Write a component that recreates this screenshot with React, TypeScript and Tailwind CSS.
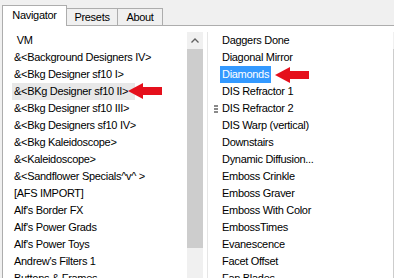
import React from 'react'

const leftItems = [
  ' VM',
  '&<Background Designers IV>',
  '&<Bkg Designer sf10 I>',
  '&<BKg Designer sf10 II>',
  '&<Bkg Designer sf10 III>',
  '&<Bkg Designers sf10 IV>',
  '&<Bkg Kaleidoscope>',
  '&<Kaleidoscope>',
  '&<Sandflower Specials^v^ >',
  '[AFS IMPORT]',
  "Alf's Border FX",
  "Alf's Power Grads",
  "Alf's Power Toys",
  "Andrew's Filters 1",
  'Buttons & Frames',
]

const rightItems = [
  'Daggers Done',
  'Diagonal Mirror',
  'Diamonds',
  'DIS Refractor 1',
  'DIS Refractor 2',
  'DIS Warp (vertical)',
  'Downstairs',
  'Dynamic Diffusion...',
  'Emboss Crinkle',
  'Emboss Graver',
  'Emboss With Color',
  'EmbossTimes',
  'Evanescence',
  'Facet Offset',
  'Fan Blades',
]

const RedArrow = ({ className }: { className: string }) => (
  <svg className={className} width="34" height="18" viewBox="0 0 34 18">
    <polygon points="0,9 15,1 15,5 34,5 34,13 15,13 15,17" fill="#e5101c" />
  </svg>
)

export default function App() {
  return (
    <div className="relative h-[278px] w-[394px] overflow-hidden bg-[#f0f0f0] font-['Liberation_Sans',Arial,sans-serif] text-[11px] tracking-[-0.3px] text-black">
      {/* tabs */}
      <div className="flex h-[25px] items-end pl-[2px]">
        <div className="relative z-10 -mb-px flex h-[21px] w-[65px] items-center justify-center border border-b-0 border-[#adadad] bg-white pb-px">
          Navigator
        </div>
        <div className="flex h-[17px] w-[51px] items-center justify-center border border-b-0 border-l-0 border-[#adadad] bg-[#f0f0f0]">
          Presets
        </div>
        <div className="flex h-[17px] w-[45px] items-center justify-center border border-b-0 border-l-0 border-[#adadad] bg-[#f0f0f0]">
          About
        </div>
      </div>

      {/* panel */}
      <div className="ml-[2px] flex h-[253px] border-l border-t border-[#adadad] bg-white pt-[6px]">
        {/* left list */}
        <div className="flex w-[184px] flex-col pl-[9px]">
          {leftItems.map((item, i) => (
            <div
              key={item}
              className={
                'h-[17px] shrink-0 whitespace-pre px-[2px] leading-[17px] ' +
                (i === 3 ? 'w-[123px] bg-[#e8e8e8]' : '')
              }
            >
              {item}
            </div>
          ))}
        </div>

        {/* scrollbar */}
        <div className="flex w-[16px] flex-col bg-[#f0f0f0]">
          <div className="flex h-[17px] items-center justify-center">
            <svg width="8" height="5" viewBox="0 0 8 5">
              <polyline points="0.5,4.5 4,1 7.5,4.5" fill="none" stroke="#606060" strokeWidth="1.3" />
            </svg>
          </div>
          <div className="h-[199px] bg-[#cdcdcd]" />
        </div>

        <div className="w-[5px] border-r border-[#e6e6e6]" />

        {/* right list */}
        <div className="flex flex-1 flex-col">
          {rightItems.map((item, i) => (
            <div key={item} className="flex h-[17px] shrink-0 items-center">
              <div className="flex w-[12px] justify-start pl-[6px]">
                {i === 4 && (
                  <div className="flex flex-col gap-px">
                    <div className="h-[2px] w-[4px] bg-[#8a8a8a]" />
                    <div className="h-[2px] w-[4px] bg-[#8a8a8a]" />
                    <div className="h-[2px] w-[4px] bg-[#8a8a8a]" />
                  </div>
                )}
              </div>
              <div
                className={
                  'h-[17px] px-[2px] leading-[17px] ' + (i === 2 ? 'bg-[#3399ff] text-white' : '')
                }
              >
                {item}
              </div>
            </div>
          ))}
        </div>

        {/* edge of the right scrollbar */}
        <div className="flex w-px flex-col bg-[#f0f0f0]">
          <div className="h-[17px]" />
          <div className="flex-1 bg-[#cdcdcd]" />
        </div>
      </div>

      <RedArrow className="absolute left-[128px] top-[82px]" />
      <RedArrow className="absolute left-[275px] top-[66px]" />
    </div>
  )
}
